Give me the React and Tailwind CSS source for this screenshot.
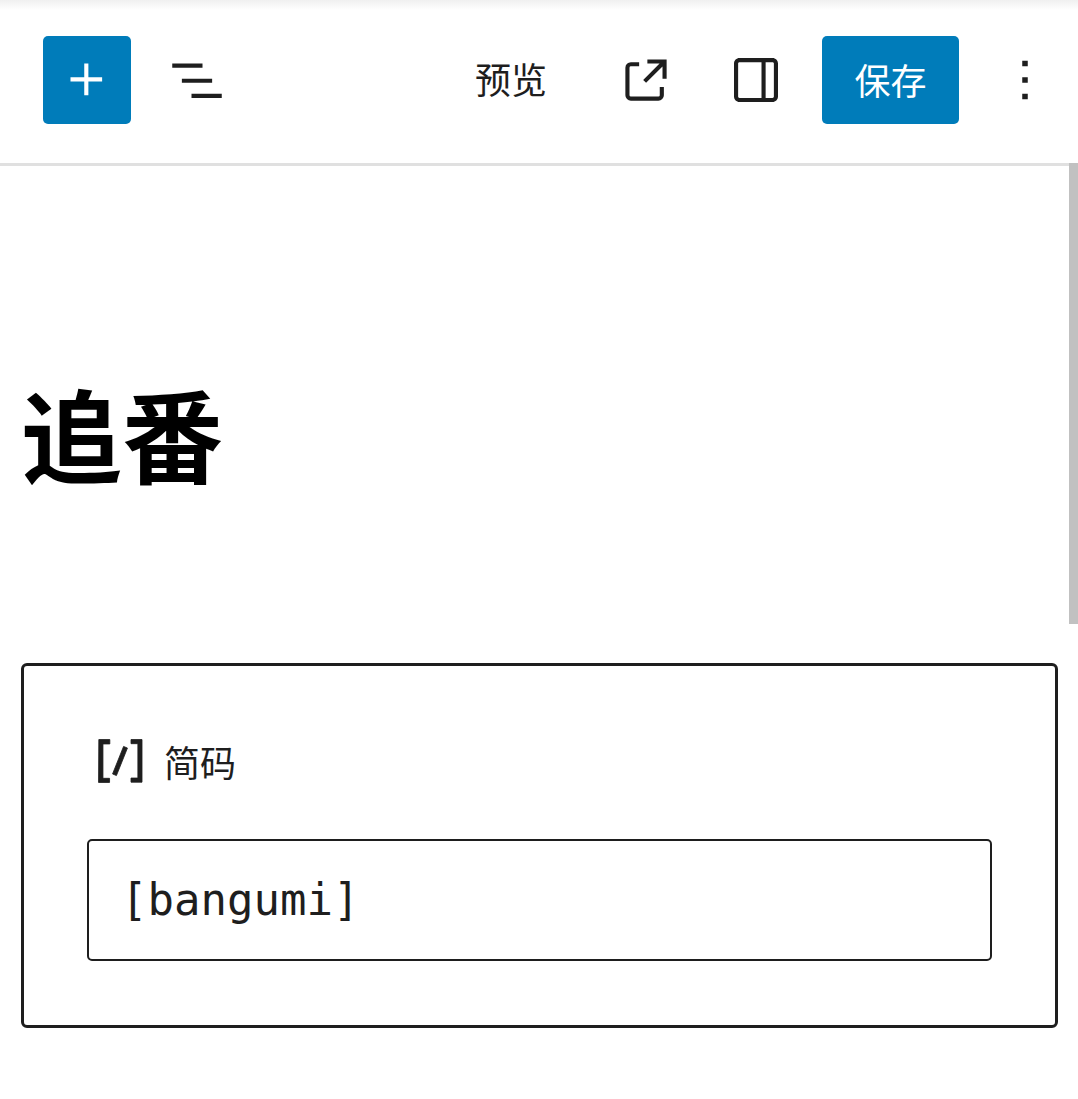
const cjk = { fontFamily: '"Noto Sans CJK SC", "Noto Sans", sans-serif' };

function Icon({ d, size = 66, bold }) {
  return (
    <svg width={size} height={size} viewBox="0 0 24 24" fill="currentColor" stroke={bold ? 'currentColor' : 'none'} strokeWidth={bold ? 0.3 : 0}>
      <path fillRule="evenodd" clipRule="evenodd" d={d} />
    </svg>
  );
}

const icons = {
  plus: 'M11 12.5V17.5H12.5V12.5H17.5V11H12.5V6H11V11H6V12.5H11Z',
  list: 'M3 6h11v1.5H3V6zm3.5 5.5h11V13h-11v-1.5zM21 17H10v1.5h11V17z',
  external: 'M19.5 4.5h-7V6h4.44l-5.97 5.97 1.06 1.06L18 7.06v4.44h1.5v-7Zm-13 1a2 2 0 0 0-2 2v10a2 2 0 0 0 2 2h10a2 2 0 0 0 2-2v-3H17v3a.5.5 0 0 1-.5.5h-10a.5.5 0 0 1-.5-.5v-10a.5.5 0 0 1 .5-.5h3V5.5h-3Z',
  sidebar: 'M18 4H6c-1.1 0-2 .9-2 2v12c0 1.1.9 2 2 2h12c1.1 0 2-.9 2-2V6c0-1.1-.9-2-2-2zm-4 14.5H6c-.3 0-.5-.2-.5-.5V6c0-.3.2-.5.5-.5h8v13zm4.5-.5c0 .3-.2.5-.5.5h-2.5v-13H18c.3 0 .5.2.5.5v12z',
  more: 'M13 19h-2v-2h2v2zm0-6h-2v-2h2v2zm0-6h-2V5h2v2z',
  shortcode: 'M16 4.2v1.5h2.5v12.5H16v1.5h4V4.2h-4zM4.2 19.8h4v-1.5H5.8V5.8h2.5V4.2h-4l-.1 15.6zm5.1-3.1l1.4.6 4-10-1.4-.6-4 10z',
};

function IconButton({ d, primary }) {
  return (
    <button className={`flex h-[88px] w-[88px] shrink-0 items-center justify-center rounded-[5px] ${primary ? 'bg-[#007cba] text-white' : 'text-[#1e1e1e]'}`}>
      <Icon d={d} />
    </button>
  );
}

export default function App() {
  return (
    <div className="relative h-[1099px] w-[1078px] overflow-hidden bg-white" style={cjk}>
      <header className="relative flex h-[166px] gap-[22px] border-b-[3px] border-[#e0e0e0] pt-[36px] pr-[9px] pl-[43px]">
        <div className="absolute inset-x-0 top-0 h-[10px] bg-gradient-to-b from-[#f0f0f0] to-white" />
        <div className="relative"><IconButton d={icons.plus} primary /></div>
        <div className="relative"><IconButton d={icons.list} /></div>
        <button className="ml-auto h-[88px] px-[33px] pb-[4px] text-[36px] text-[#1e1e1e]">预览</button>
        <IconButton d={icons.external} />
        <IconButton d={icons.sidebar} />
        <button className="h-[88px] w-[137px] rounded-[5px] bg-[#007cba] pb-[2px] text-[36px] text-white">保存</button>
        <IconButton d={icons.more} />
      </header>

      <main className="pl-[21px]">
        <h1 className="pt-[196px] text-[101px] leading-[140px] font-bold text-black">追番</h1>
        <section className="mt-[161px] h-[365px] w-[1037px] rounded-[6px] border-[3px] border-[#1e1e1e] px-[63px] pt-[62px]">
          <div className="flex h-[66px] items-center text-[#1e1e1e]">
            <Icon d={icons.shortcode} bold />
            <span className="ml-[11px] text-[36px]">简码</span>
          </div>
          <div className="mt-[45px] flex h-[122px] items-center rounded-[5px] border-2 border-[#1e1e1e] pl-[32px] text-[44px] text-[#1e1e1e]" style={{ fontFamily: '"DejaVu Sans Mono", monospace' }}>
            [bangumi]
          </div>
        </section>
      </main>

      <div className="absolute top-[163px] right-0 h-[461px] w-[9px] bg-[#c1c1c1]" />
    </div>
  );
}
